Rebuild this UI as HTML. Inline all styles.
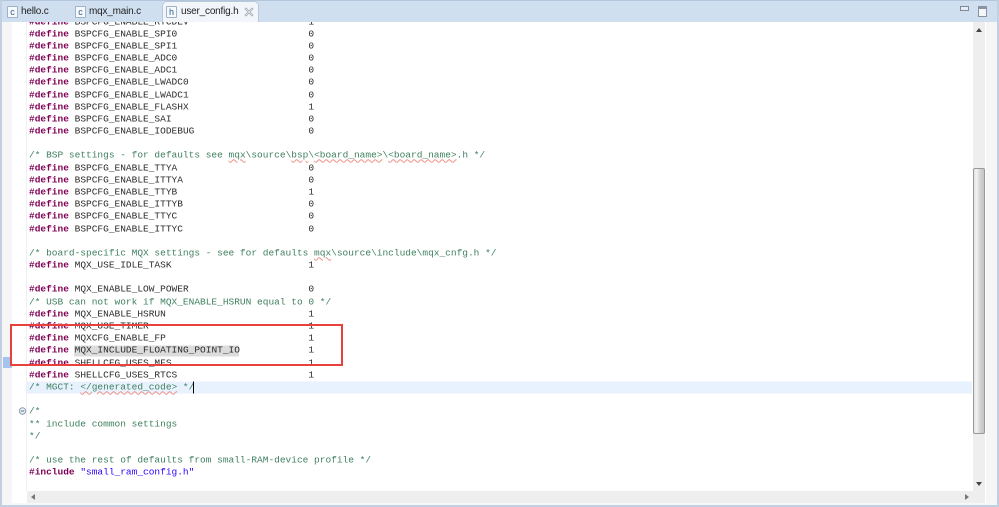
<!DOCTYPE html>
<html><head><meta charset="utf-8">
<style>
html,body{margin:0;padding:0}
body{width:999px;height:507px;overflow:hidden;position:relative;background:#fff;font-family:"Liberation Mono",monospace;font-size:9.5px}
.a{position:absolute}
#clip{position:absolute;left:0;top:22px;width:972px;height:469px;overflow:hidden}
#code{position:absolute;left:0;top:0;width:972px;height:469px;transform:translateY(.5px);filter:blur(.3px)}
.l{position:absolute;left:29px;white-space:pre;height:12px;line-height:12px;color:#2a2a2a}
.l b{color:#7f0055;font-weight:bold}
.l i{font-style:normal;color:#3f7f5f}
.l u{text-decoration:underline wavy #ee8f84 1px;text-underline-offset:1px}
.l s{text-decoration:none;color:#2a00ff}
.tab{position:absolute;top:4px;font:10px "Liberation Sans",sans-serif;letter-spacing:-.2px;color:#222;height:16px;line-height:16px;white-space:pre}
.ic{position:absolute;top:6px;width:9px;height:10px;background:#f7fafd;border:1px solid #9fb2c8;font:9px/10px "Liberation Sans",sans-serif;color:#2c5a8a;text-align:center;border-radius:1px}
</style></head><body>

<div id="clip"><div id="code">
<div class="l" style="top:-6px"><b>#define</b> BSPCFG_ENABLE_RTCDEV                     1</div>
<div class="l" style="top:6px"><b>#define</b> BSPCFG_ENABLE_SPI0                       0</div>
<div class="l" style="top:18px"><b>#define</b> BSPCFG_ENABLE_SPI1                       0</div>
<div class="l" style="top:30px"><b>#define</b> BSPCFG_ENABLE_ADC0                       0</div>
<div class="l" style="top:42px"><b>#define</b> BSPCFG_ENABLE_ADC1                       0</div>
<div class="l" style="top:54px"><b>#define</b> BSPCFG_ENABLE_LWADC0                     0</div>
<div class="l" style="top:67px"><b>#define</b> BSPCFG_ENABLE_LWADC1                     0</div>
<div class="l" style="top:79px"><b>#define</b> BSPCFG_ENABLE_FLASHX                     1</div>
<div class="l" style="top:91px"><b>#define</b> BSPCFG_ENABLE_SAI                        0</div>
<div class="l" style="top:103px"><b>#define</b> BSPCFG_ENABLE_IODEBUG                    0</div>
<div class="l" style="top:127px"><i>/* BSP settings - for defaults see <u>mqx</u>\source\<u>bsp</u>\<u>&lt;board_name&gt;</u>\<u>&lt;board_name&gt;</u>.h */</i></div>
<div class="l" style="top:140px"><b>#define</b> BSPCFG_ENABLE_TTYA                       0</div>
<div class="l" style="top:152px"><b>#define</b> BSPCFG_ENABLE_ITTYA                      0</div>
<div class="l" style="top:164px"><b>#define</b> BSPCFG_ENABLE_TTYB                       1</div>
<div class="l" style="top:176px"><b>#define</b> BSPCFG_ENABLE_ITTYB                      0</div>
<div class="l" style="top:188px"><b>#define</b> BSPCFG_ENABLE_TTYC                       0</div>
<div class="l" style="top:201px"><b>#define</b> BSPCFG_ENABLE_ITTYC                      0</div>
<div class="l" style="top:225px"><i>/* board-specific MQX settings - see for defaults <u>mqx</u>\source\include\mqx_cnfg.h */</i></div>
<div class="l" style="top:237px"><b>#define</b> MQX_USE_IDLE_TASK                        1</div>
<div class="l" style="top:261px"><b>#define</b> MQX_ENABLE_LOW_POWER                     0</div>
<div class="l" style="top:274px"><i>/* USB can not work if MQX_ENABLE_HSRUN equal to 0 */</i></div>
<div class="l" style="top:286px"><b>#define</b> MQX_ENABLE_HSRUN                         1</div>
<div class="l" style="top:298px"><b>#define</b> MQX_USE_TIMER                            1</div>
<div class="l" style="top:310px"><b>#define</b> MQXCFG_ENABLE_FP                         1</div>
<div class="a" style="left:74px;top:323px;width:165px;height:11px;background:#dcdcdc"></div>
<div class="l" style="top:322px"><b>#define</b> MQX_INCLUDE_FLOATING_POINT_IO            1</div>
<div class="l" style="top:335px"><b>#define</b> SHELLCFG_USES_MFS                        1</div>
<div class="l" style="top:347px"><b>#define</b> SHELLCFG_USES_RTCS                       1</div>
<div class="a" style="left:27px;top:359px;width:945px;height:12px;background:#e8f2fe"></div>
<div class="l" style="top:359px"><i>/* MGCT: <u>&lt;/generated_code&gt;</u> */</i></div>
<div class="a" style="left:193px;top:359px;width:1px;height:12px;background:#000"></div>
<div class="l" style="top:383px"><i>/*</i></div>
<div class="l" style="top:396px"><i>** include common settings</i></div>
<div class="l" style="top:408px"><i>*/</i></div>
<div class="l" style="top:432px"><i>/* use the rest of defaults from small-RAM-device profile */</i></div>
<div class="l" style="top:444px"><b>#include</b> <s>"small_ram_config.h"</s></div>
</div></div>

<!-- left ruler -->
<div class="a" style="left:2px;top:22px;width:10px;height:481px;background:#f6f6f6"></div>
<div class="a" style="left:26px;top:22px;width:1px;height:469px;background:#f0f0f0"></div>
<div class="a" style="left:3px;top:357px;width:9px;height:11px;background:#a4c4ee"></div>
<svg class="a" style="left:18px;top:406px" width="10" height="10"><circle cx="4.500" cy="5" r="3.200" fill="#eef1f5" stroke="#8d9db0"/><path d="M2.800 5H6.200" stroke="#5a6a80"/></svg>

<!-- tab bar -->
<div class="a" style="left:0;top:0;width:999px;height:22px;background:#cfdff0;border-top:1px solid #b4c6dc;box-sizing:border-box"></div>
<div class="a" style="left:162px;top:1px;width:97px;height:21px;background:#f2f6fb;border:1px solid #b9c9dc;border-bottom:0;border-radius:5px 5px 0 0;box-sizing:border-box"></div>
<div class="ic" style="left:7px">c</div><div class="tab" style="left:21px">hello.c</div>
<div class="ic" style="left:75px">c</div><div class="tab" style="left:89px">mqx_main.c</div>
<div class="ic" style="left:166px">h</div><div class="tab" style="left:181px">user_config.h</div>
<svg class="a" style="left:244px;top:7px" width="10" height="10"><path d="M1 2 2 1 5 4 8 1 9 2 6 5 9 8 8 9 5 6 2 9 1 8 4 5Z" fill="#f4f6f8" stroke="#a6abb2" stroke-width=".8"/></svg>
<!-- min / max -->
<div class="a" style="left:960px;top:6px;width:7px;height:3px;background:#e8eef5;border:1px solid #7f8a98"></div>
<div class="a" style="left:978px;top:6px;width:7px;height:7px;background:#f4f6f8;border:1px solid #8a94a0;border-top:3px solid #8a94a0"></div>

<!-- right side -->
<div class="a" style="left:973px;top:22px;width:12px;height:469px;background:#eeeeee"></div>
<div class="a" style="left:986px;top:22px;width:11px;height:483px;background:#f6f6f6"></div>
<div class="a" style="left:973px;top:168px;width:12px;height:266px;box-sizing:border-box;border:1px solid #999;border-radius:2px;background:linear-gradient(90deg,#e4e4e4,#f2f2f2 25%,#d4d4d4 60%,#c4c4c4)"></div>
<svg class="a" style="left:975px;top:27px" width="8" height="6"><path d="M1 5h6L4 1z" fill="#444"/></svg>
<svg class="a" style="left:975px;top:481px" width="8" height="6"><path d="M1 1h6L4 5z" fill="#444"/></svg>

<!-- bottom scrollbar -->
<div class="a" style="left:27px;top:491px;width:958px;height:12px;background:#eeeeee"></div>
<svg class="a" style="left:30px;top:493px" width="6" height="8"><path d="M5 1v6L1 4z" fill="#777"/></svg>
<svg class="a" style="left:964px;top:493px" width="6" height="8"><path d="M1 1v6l4-3z" fill="#777"/></svg>
<div class="a" style="left:2px;top:503px;width:995px;height:2px;background:#f8f8f8"></div>

<!-- outer border -->
<div class="a" style="left:0;top:0;width:2px;height:507px;background:#c2cfe2"></div>
<div class="a" style="left:997px;top:0;width:2px;height:507px;background:#c2cfe2"></div>
<div class="a" style="left:0;top:505px;width:999px;height:2px;background:#c2cfe2"></div>

<!-- red annotation -->
<div class="a" style="left:10px;top:324px;width:333px;height:42px;box-sizing:border-box;border:2px solid #e8403c"></div>
</body></html>
